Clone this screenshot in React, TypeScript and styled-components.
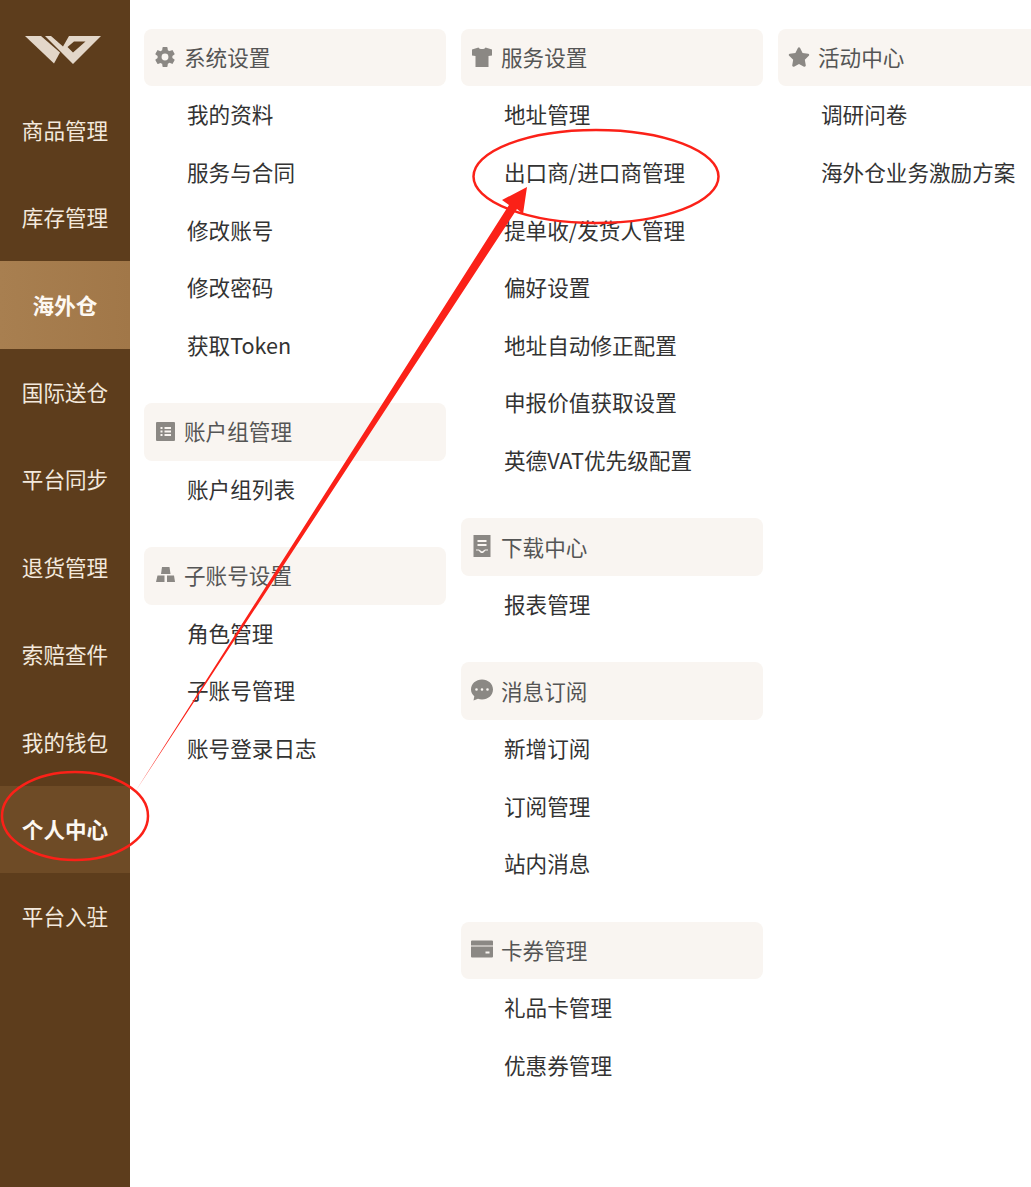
import React from 'react';
import styled, { createGlobalStyle } from 'styled-components';
import { FaStar } from 'react-icons/fa';
import { IoSettingsSharp } from 'react-icons/io5';

const GlobalStyle = createGlobalStyle`
  html, body {
    margin: 0;
    padding: 0;
    background: #fff;
  }
  body {
    font-family: "Noto Sans CJK SC", "Noto Sans", sans-serif;
  }
`;

const Page = styled.div`
  position: relative;
  display: flex;
  width: 1031px;
  height: 1187px;
  overflow: hidden;
`;

const Sidebar = styled.nav`
  flex: 0 0 130px;
  background: #5d3d1c;
`;

const LogoWrap = styled.div`
  display: flex;
  justify-content: center;
  height: 86.6px;
  padding: 36px 4px 0 0;
  box-sizing: border-box;
`;

const NavItem = styled.div<{ $state?: 'hot' | 'current' }>`
  display: flex;
  align-items: center;
  justify-content: center;
  box-sizing: border-box;
  height: 87.4px;
  padding-bottom: 2px;
  font-size: 21.6px;
  font-weight: ${p => (p.$state ? 700 : 400)};
  color: ${p => (p.$state ? '#fdf8f2' : '#f3e9dd')};
  background: ${p =>
    p.$state === 'hot'
      ? 'linear-gradient(90deg, #a87f50, #a17748)'
      : p.$state === 'current'
        ? '#6e4b26'
        : 'transparent'};
`;

const Columns = styled.div`
  display: flex;
  flex: none;
  gap: 15px;
  padding: 28.8px 0 0 14px;
`;

const Column = styled.div`
  width: 302px;
`;

const Group = styled.section`
  margin-bottom: 28.8px;
`;

const GroupHeader = styled.div`
  display: flex;
  align-items: center;
  gap: 8px;
  box-sizing: border-box;
  height: 57.6px;
  padding: 0 0 2px 10px;
  border-radius: 8px;
  background: #f9f5f1;
  font-size: 21.6px;
  color: #555;

  svg {
    flex: none;
    width: 22px;
    height: 22px;
    color: #8b8884;
  }
`;

const MenuItem = styled.div`
  height: 57.6px;
  padding-left: 43px;
  font-size: 21.6px;
  line-height: 55.6px;
  color: #333;
  white-space: nowrap;
`;

const Markup = styled.svg`
  position: absolute;
  top: 0;
  left: 0;
  width: 1031px;
  height: 1187px;
  pointer-events: none;
`;

const Logo = () => (
  <svg width="76" height="28" viewBox="25 36 76 28" fill="#e3d7c9">
    <path d="M25 36H41L60 52.5 54 63.5Z" />
    <path
      fillRule="evenodd"
      d="M45 36H51L63 46.5 69 36H101L73 64 61 52ZM74 41.5 67.5 47 73 52.5 85.5 41.5Z"
    />
  </svg>
);

const GearIcon = () => <IoSettingsSharp />;

const ListIcon = () => (
  <svg viewBox="0 0 22 22" fill="currentColor">
    <path
      fillRule="evenodd"
      d="M3 2H20A1 1 0 0 1 21 3V20A1 1 0 0 1 20 21H3A1 1 0 0 1 2 20V3A1 1 0 0 1 3 2ZM6.5 7V9H8.5V7ZM10.5 7V9H17V7ZM6.5 10.5V12.5H8.5V10.5ZM10.5 10.5V12.5H17V10.5ZM6.5 14V16H8.5V14ZM10.5 14V16H17V14Z"
    />
  </svg>
);

const BlocksIcon = () => (
  <svg viewBox="0 0 22 22" fill="currentColor">
    <path d="M8 3H15.5L16.5 10H7Z" />
    <path d="M3.5 11.5H10.5V18H2Z" />
    <path d="M13 11.5H20L21 18H13Z" />
  </svg>
);

const ShirtIcon = () => (
  <svg viewBox="0 0 22 22" fill="currentColor">
    <path d="M7.5 1.5C8.5 3.5 13.5 3.5 14.5 1.5L21 3.5V9.5L17.5 10V21H4.5V10L1 9.5V3.5Z" />
  </svg>
);

const InboxIcon = () => (
  <svg viewBox="0 0 22 22" fill="currentColor">
    <path
      fillRule="evenodd"
      d="M2.5 0H19.5V22H2.5ZM6.5 5V7H15.5V5ZM6.5 9V11H15.5V9ZM5 14.5V15.5H7.5L10 18H12L14.5 15.5H17V14.5H14L11 16.5 8 14.5Z"
    />
  </svg>
);

const BubbleIcon = () => (
  <svg viewBox="0 0 22 22" fill="currentColor">
    <path
      fillRule="evenodd"
      d="M11 .5C17 .5 22 4.8 22 10.5S17 20.5 11 20.5C9.6 20.5 8.2 20.3 7 19.8L2.5 21.5 3.3 17.2C1.2 15.4 0 13.1 0 10.5 0 4.8 5 .5 11 .5ZM5.5 9.2A1.3 1.3 0 1 0 5.5 11.8 1.3 1.3 0 0 0 5.5 9.2ZM11 9.2A1.3 1.3 0 1 0 11 11.8 1.3 1.3 0 0 0 11 9.2ZM16.5 9.2A1.3 1.3 0 1 0 16.5 11.8 1.3 1.3 0 0 0 16.5 9.2Z"
    />
  </svg>
);

const CardIcon = () => (
  <svg viewBox="0 0 22 22" fill="currentColor">
    <path
      fillRule="evenodd"
      d="M0 3.5A1 1 0 0 1 1 2.5H21A1 1 0 0 1 22 3.5V7.5H0ZM0 8.5H22V18.5A1 1 0 0 1 21 19.5H1A1 1 0 0 1 0 18.5ZM14.5 13.5V15.5H18.5V13.5Z"
    />
  </svg>
);

const columns = [
  [
    { icon: <GearIcon />, title: '系统设置', items: ['我的资料', '服务与合同', '修改账号', '修改密码', '获取Token'] },
    { icon: <ListIcon />, title: '账户组管理', items: ['账户组列表'] },
    { icon: <BlocksIcon />, title: '子账号设置', items: ['角色管理', '子账号管理', '账号登录日志'] },
  ],
  [
    {
      icon: <ShirtIcon />,
      title: '服务设置',
      items: ['地址管理', '出口商/进口商管理', '提单收/发货人管理', '偏好设置', '地址自动修正配置', '申报价值获取设置', '英德VAT优先级配置'],
    },
    { icon: <InboxIcon />, title: '下载中心', items: ['报表管理'] },
    { icon: <BubbleIcon />, title: '消息订阅', items: ['新增订阅', '订阅管理', '站内消息'] },
    { icon: <CardIcon />, title: '卡券管理', items: ['礼品卡管理', '优惠券管理'] },
  ],
  [{ icon: <FaStar />, title: '活动中心', items: ['调研问卷', '海外仓业务激励方案'] }],
];

const navItems: { label: string; state?: 'hot' | 'current' }[] = [
  { label: '商品管理' },
  { label: '库存管理' },
  { label: '海外仓', state: 'hot' },
  { label: '国际送仓' },
  { label: '平台同步' },
  { label: '退货管理' },
  { label: '索赔查件' },
  { label: '我的钱包' },
  { label: '个人中心', state: 'current' },
  { label: '平台入驻' },
];

const App: React.FC = () => (
  <Page>
    <GlobalStyle />
    <Sidebar>
      <LogoWrap>
        <Logo />
      </LogoWrap>
      {navItems.map(item => (
        <NavItem key={item.label} $state={item.state}>{item.label}</NavItem>
      ))}
    </Sidebar>
    <Columns>
      {columns.map(groups => (
        <Column key={groups[0].title}>
          {groups.map(group => (
            <Group key={group.title}>
              <GroupHeader>
                {group.icon}
                {group.title}
              </GroupHeader>
              {group.items.map(item => (
                <MenuItem key={item}>{item}</MenuItem>
              ))}
            </Group>
          ))}
        </Column>
      ))}
    </Columns>
    {/* red hand-drawn annotation on top of the page */}
    <Markup viewBox="0 0 1031 1187" fill="none">
      <ellipse cx="596" cy="176.5" rx="122.5" ry="46.5" stroke="#fb2118" strokeWidth="2.5" />
      <ellipse cx="75" cy="816" rx="73" ry="44" stroke="#fb2118" strokeWidth="2.5" />
      <path d="M135 792 509 205 502 200 527 187 523 214 517 209Z" fill="#fb2118" />
    </Markup>
  </Page>
);

export default App;
